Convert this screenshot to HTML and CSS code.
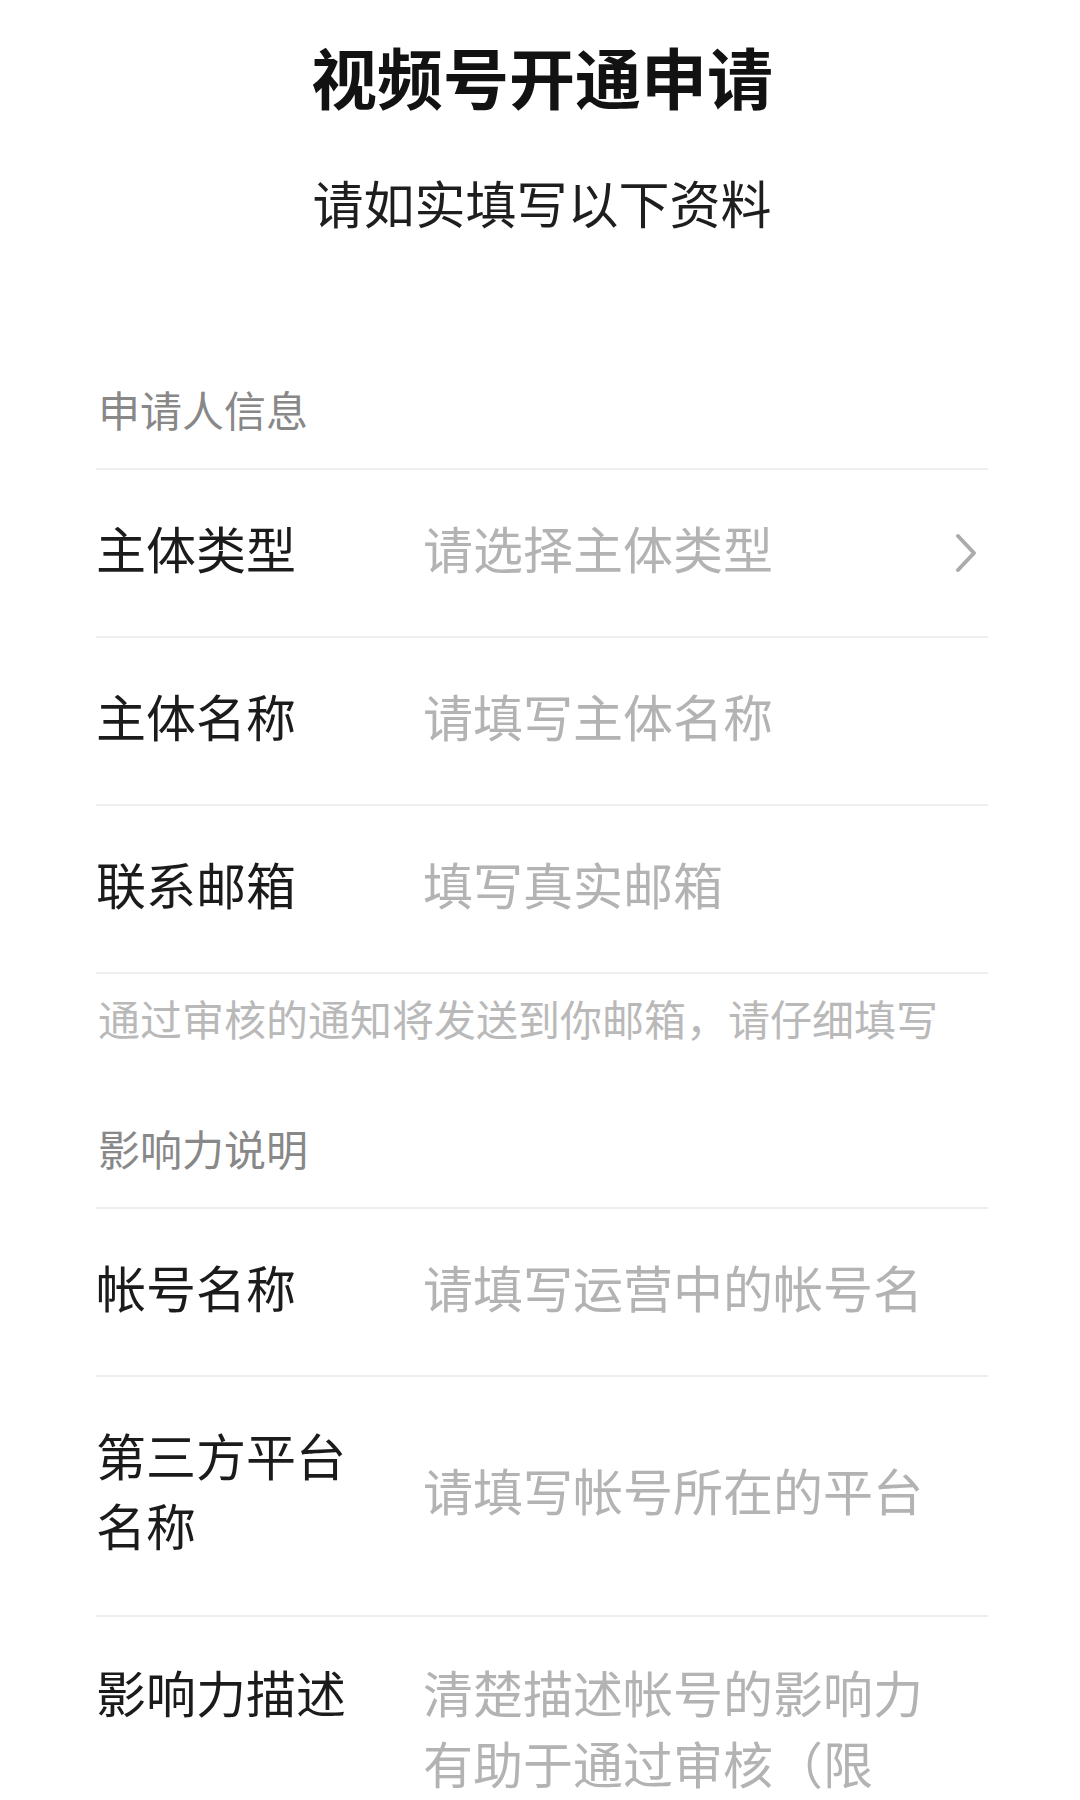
FILE: index.html
```html
<!DOCTYPE html>
<html lang="zh-CN">
<head>
<meta charset="utf-8">
<title>视频号开通申请</title>
<link rel="stylesheet" href="styles.css">
</head>
<body>
<main class="page">
  <h1 class="title">视频号开通申请</h1>
  <p class="subtitle">请如实填写以下资料</p>

  <section class="group group-first">
    <div class="group-head">申请人信息</div>
    <div class="rows">
      <div class="row">
        <div class="label">主体类型</div>
        <div class="value">请选择主体类型</div>
        <svg class="chev" width="24" height="42" viewBox="0 0 24 42" aria-hidden="true"><path d="M4 4 L20 21 L4 38" fill="none" stroke="#ababab" stroke-width="4" stroke-linecap="round" stroke-linejoin="round"/></svg>
      </div>
      <div class="row">
        <div class="label">主体名称</div>
        <div class="value">请填写主体名称</div>
      </div>
      <div class="row">
        <div class="label">联系邮箱</div>
        <div class="value">填写真实邮箱</div>
      </div>
    </div>
    <p class="hint">通过审核的通知将发送到你邮箱，请仔细填写</p>
  </section>

  <section class="group group-second">
    <div class="group-head">影响力说明</div>
    <div class="rows">
      <div class="row">
        <div class="label">帐号名称</div>
        <div class="value">请填写运营中的帐号名</div>
      </div>
      <div class="row row-tall">
        <div class="label label-wrap">第三方平台<br>名称</div>
        <div class="value">请填写帐号所在的平台</div>
      </div>
      <div class="row row-top">
        <div class="label">影响力描述</div>
        <div class="value value-wrap">清楚描述帐号的影响力有助于通过审核（限</div>
      </div>
    </div>
  </section>
</main>
</body>
</html>
```

FILE: styles.css
```css
html, body {
  margin: 0;
  padding: 0;
  background: #ffffff;
}

body {
  font-family: "Noto Sans CJK SC", "Noto Sans", sans-serif;
  color: #1b1b1b;
  height: 1800px;
  overflow: hidden;
}

.page {
  padding: 30px 92px 0 96px;
}

.title {
  margin: 0;
  text-align: center;
  font-size: 66px;
  line-height: 90px;
  font-weight: 700;
  color: #121212;
}

.subtitle {
  margin: 47px 0 0;
  text-align: center;
  font-size: 51px;
  line-height: 70px;
  font-weight: 400;
  color: #1e1e1e;
}

.group-first {
  margin-top: 146px;
}

.group-second {
  margin-top: 74px;
}

.group-head {
  font-size: 42px;
  line-height: 52px;
  color: #888888;
  padding-bottom: 33px;
  padding-left: 2px;
}

.rows {
  display: flex;
  flex-direction: column;
}

.row {
  display: flex;
  align-items: center;
  border-top: 2px solid #eeeeee;
  padding: 42px 0 54px;
}

.rows .row:last-child {
  border-bottom: 2px solid #eeeeee;
}

.group-second .rows .row:last-child {
  border-bottom: none;
}

.row-tall {
  padding: 42px 0 56px;
}

.row-top {
  align-items: flex-start;
  padding-top: 39px;
}

.label {
  width: 327px;
  flex: none;
  font-size: 50px;
  line-height: 70px;
  color: #1b1b1b;
}

.label-wrap {
  line-height: 70px;
}

.value {
  width: 523px;
  flex: none;
  font-size: 50px;
  line-height: 70px;
  color: #b3b3b3;
}

.value-wrap {
  width: 515px;
  line-height: 71px;
}

.chev {
  display: block;
  margin-left: 8px;
  margin-top: 12px;
}

.hint {
  margin: 14px 0 0;
  font-size: 42px;
  line-height: 60px;
  color: #b9b9b9;
  padding-left: 2px;
}
```
